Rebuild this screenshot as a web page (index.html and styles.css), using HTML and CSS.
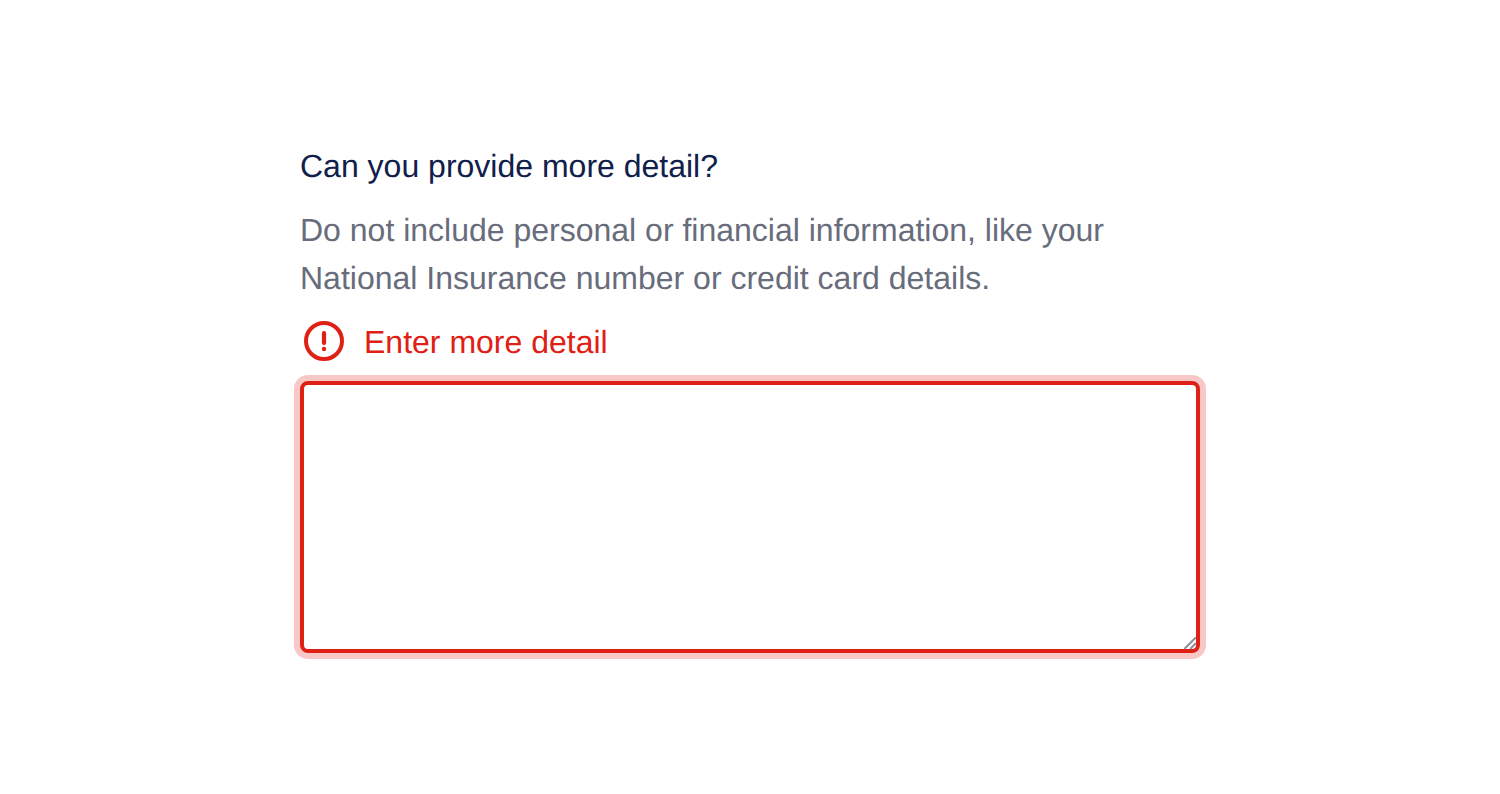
FILE: index.html
```html
<!DOCTYPE html>
<html lang="en">
	<head>
		<meta charset="UTF-8">
		<title>Can you provide more detail?</title>
		<link rel="stylesheet" href="styles.css">
	</head>
	<body>
		<div class="form-group">
			<label class="label" for="more-detail">Can you provide more detail?</label>
			<p class="hint" id="more-detail-hint">Do not include personal or financial information, like your National Insurance number or credit card details.</p>
			<p class="error" id="more-detail-error">
				<svg class="error-icon" viewBox="0 0 48 48" aria-hidden="true">
					<circle cx="24" cy="24" r="18" fill="none" stroke="currentColor" stroke-width="4"/>
					<rect x="21.9" y="14" width="4.2" height="14" rx="1.9" fill="currentColor"/>
					<circle cx="24" cy="32" r="2.2" fill="currentColor"/>
				</svg>
				<span>Enter more detail</span>
			</p>
			<div class="field">
				<textarea class="textarea" id="more-detail" aria-describedby="more-detail-hint more-detail-error"></textarea>
				<svg class="grip" viewBox="0 0 14 14" aria-hidden="true">
					<path d="M2 12.3L12.3 2M7.8 12.3l4.5-4.5" fill="none" stroke="#8b8f97" stroke-width="2" stroke-linecap="round"/>
				</svg>
			</div>
		</div>
	</body>
</html>
```

FILE: styles.css
```css
*{
	box-sizing: border-box;
	margin: 0;
	padding: 0;
}
body{
	min-height: 100vh;
	background: #ffffff;
	font-family: "Liberation Sans", Arial, sans-serif;
	font-size: 32px;
	line-height: 48px;
	text-rendering: geometricPrecision;
}
.form-group{
	width: 900px;
	margin: 0 auto;
	padding: 142px 0 40px;
}
.label{
	display: block;
	margin-bottom: 16px;
	color: #10204b;
}
.hint{
	margin-bottom: 16px;
	color: #686c7b;
}
.error{
	display: flex;
	gap: 16px;
	margin-bottom: 15px;
	color: #df2014;
}
.error-icon{
	width: 48px;
	height: 48px;
	margin-top: -1px;
}
.field{
	position: relative;
	height: 272px;
}
.textarea{
	display: block;
	width: 100%;
	height: 100%;
	padding: 16px;
	border: 4px solid #df2014;
	border-radius: 8px;
	outline: none;
	box-shadow: 0 0 0 6px #f7c8c6;
	font: inherit;
	resize: none;
}
.grip{
	position: absolute;
	right: 3px;
	bottom: 3px;
	width: 14px;
	height: 14px;
	pointer-events: none;
}
```
